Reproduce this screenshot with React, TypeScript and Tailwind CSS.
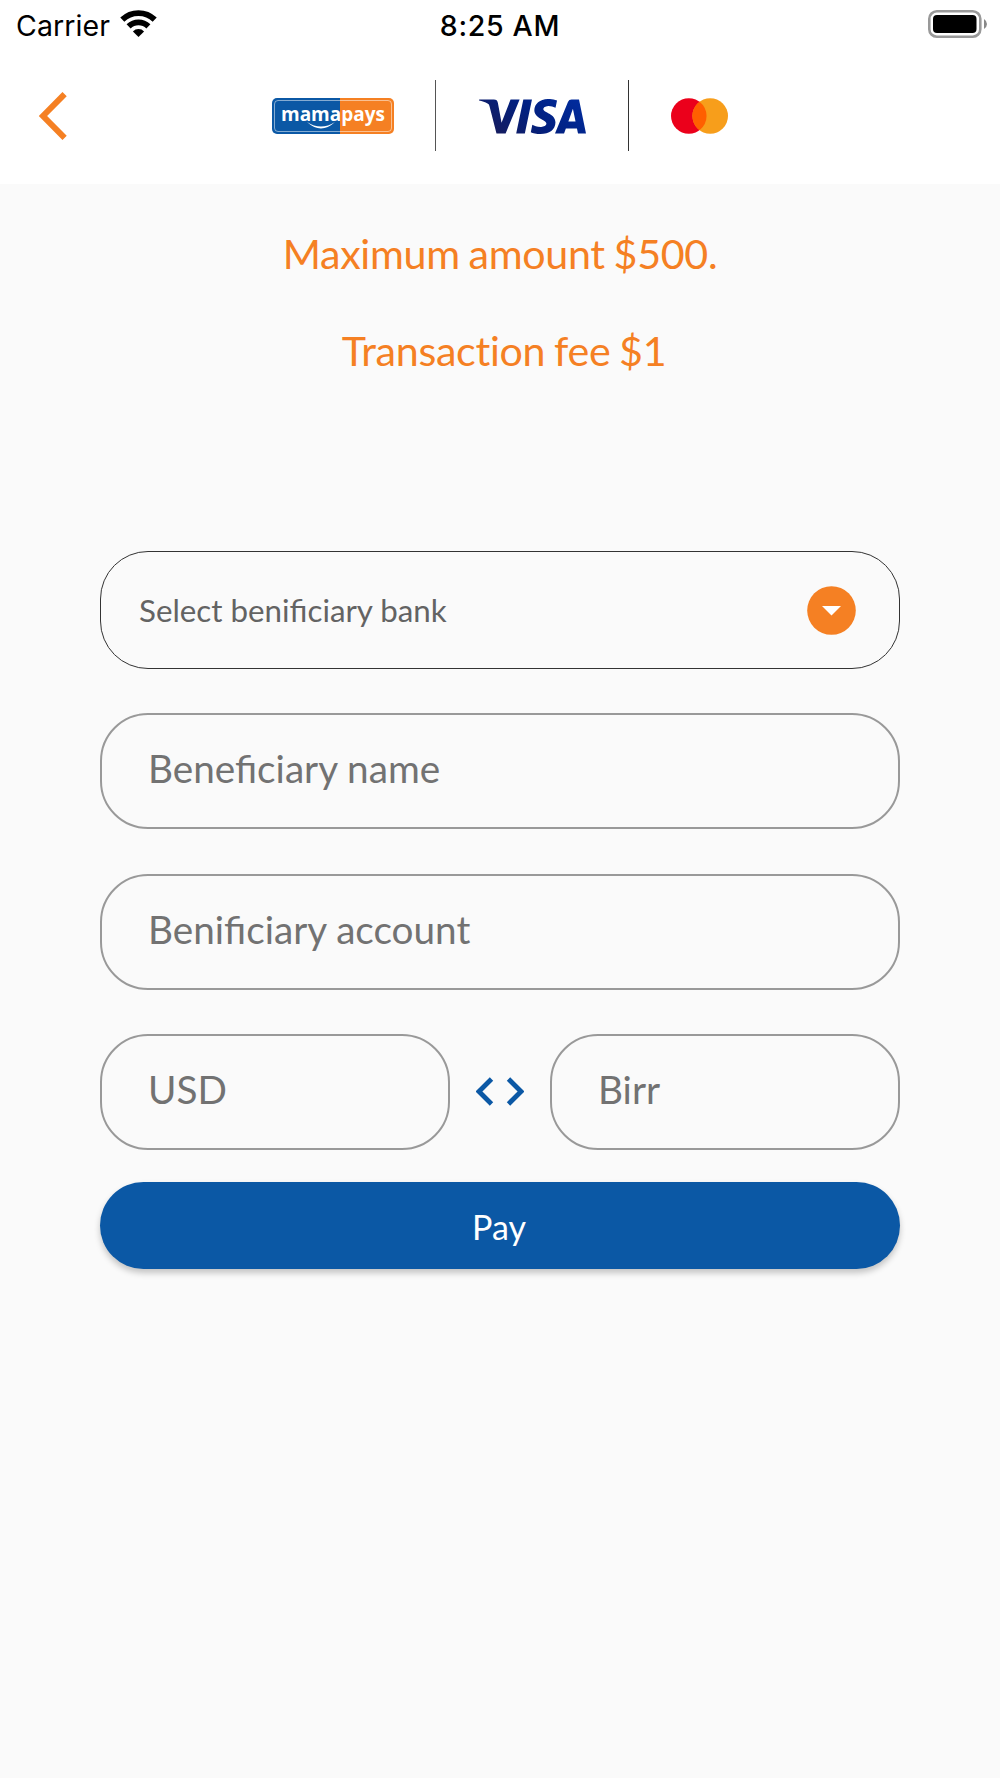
import React from "react";
import { SiVisa } from "react-icons/si";

function WifiIcon() {
  return (
    <svg className="ml-[10px] mt-[10px] h-[27px] w-[37px]" viewBox="0 0 37 27">
      <g fill="none" stroke="#000" strokeWidth="5.8">
        <path d="M2.3 9.7 A23.2 23.2 0 0 1 34.7 9.7" />
        <path d="M8.6 16.4 A14.2 14.2 0 0 1 28.4 16.4" />
      </g>
      <path d="M18.5 27 L12.9 21.4 A8 8 0 0 1 24.1 21.4 Z" />
    </svg>
  );
}

function StatusBar() {
  return (
    <div className="grid h-[50px] grid-cols-3 font-['Inter'] text-black">
      <div className="flex items-start pl-4">
        <span className="text-[28.5px] leading-[52px] tracking-[0.1px]">Carrier</span>
        <WifiIcon />
      </div>
      <div className="text-center text-[28.5px] font-medium leading-[52px] tracking-[0.7px]">8:25 AM</div>
      <div className="flex items-start justify-end pr-[13px] pt-[10px]">
        <svg className="h-7 w-[59px]" viewBox="0 0 59 28">
          <rect x="1.3" y="1.3" width="51" height="25.4" rx="7.5" fill="none" stroke="#999" strokeWidth="2.6" />
          <rect x="5" y="5" width="43.5" height="18" rx="4" />
          <path d="M56 9 Q59 11 59 14 Q59 17 56 19 Z" fill="#888" />
        </svg>
      </div>
    </div>
  );
}

function MamapaysLogo() {
  return (
    <div className="relative flex h-9 w-[122px] overflow-hidden rounded-[5px] bg-[linear-gradient(90deg,#0b58a5_68px,#f58023_68px)]">
      <div className="absolute inset-[2px] rounded-[4px] border border-white/50" />
      <span className="w-full text-center font-['Open_Sans'] text-[19px] font-bold leading-[32px] text-white">
        mamapays
      </span>
      <svg className="absolute left-[35px] top-[24px] h-2 w-7" viewBox="0 0 28 8">
        <path d="M0 0 Q14 9 28 0 Q14 13 0 0Z" fill="#fff" />
      </svg>
    </div>
  );
}

function Header() {
  return (
    <header className="flex h-[134px] items-start bg-white">
      <button aria-label="Back" className="ml-[38px] mt-[42px] h-12 w-[29px]">
        <svg className="h-12 w-[29px]" viewBox="0 0 29 48" fill="none" stroke="#f58023" strokeWidth="6">
          <path d="M26.6 2.1 L5 24 L26.6 45.9" />
        </svg>
      </button>
      <div className="ml-[205px] mt-[30px] flex h-[71px] items-center">
        <MamapaysLogo />
        <div className="ml-[41px] h-[71px] w-px bg-[#555]" />
        <SiVisa
          className="ml-[43px] mt-0.5 h-[35px] w-[107px]"
          viewBox="0 8.13 24 7.75"
          preserveAspectRatio="none"
          fill="url(#visa-blue)"
          aria-label="VISA"
        />
        <div className="ml-[42px] h-[71px] w-px bg-[#333]" />
        <svg className="ml-[42px] h-9 w-[57px]" viewBox="0 0 57 36">
          <circle cx="17.8" cy="18" r="17.8" fill="#eb001b" />
          <circle cx="39.2" cy="18" r="17.8" fill="#f79e1b" />
          <path d="M28.5 3.8 A17.8 17.8 0 0 1 28.5 32.2 A17.8 17.8 0 0 1 28.5 3.8Z" fill="#ff5f00" />
        </svg>
      </div>
      <svg width="0" height="0">
        <defs>
          <linearGradient id="visa-blue" x1="0" y1="0.7" x2="1" y2="0.3">
            <stop offset="0" stopColor="#171c5c" />
            <stop offset="0.5" stopColor="#02207f" />
            <stop offset="1" stopColor="#012b9c" />
          </linearGradient>
        </defs>
      </svg>
    </header>
  );
}

function Field({ label }: { label: string }) {
  return (
    <input
      aria-label={label}
      placeholder={label}
      className="block h-[116px] w-full min-w-0 rounded-[48px] border-2 border-[#999] bg-transparent px-[46px] pb-[6px] text-[38.7px] text-[#727272] outline-none placeholder:text-[#727272] placeholder:opacity-100"
    />
  );
}

export default function App() {
  return (
    <div className="min-h-[1778px] w-[1000px] bg-[#fafafa] font-['Lato',sans-serif]">
      <div className="bg-white">
        <StatusBar />
        <Header />
      </div>
      <main className="px-[100px]">
        <div className="h-[367px] pt-[45px] text-center text-[41.2px] leading-[49px] tracking-[-0.3px] text-[#f58023] [word-spacing:-1.5px]">
          <p>Maximum amount $500.</p>
          <p className="ml-2 mt-12">Transaction fee $1</p>
        </div>
        <button className="flex h-[118px] w-full items-center justify-between rounded-[48px] border border-[#333] pl-[38px] pr-[43px]">
          <span className="text-[31.3px] text-[#636363]">Select benificiary bank</span>
          <svg className="h-[49px] w-[49px]" viewBox="0 0 49 49">
            <circle cx="24.5" cy="24.5" r="24.3" fill="#f58023" />
            <path d="M15 20 H34 L24.5 29.5Z" fill="#fff" />
          </svg>
        </button>
        <div className="mt-11 flex flex-col gap-[45px]">
          <Field label="Beneficiary name" />
          <Field label="Benificiary account" />
        </div>
        <div className="mt-11 flex items-center">
          <div className="w-[350px]"><Field label="USD" /></div>
          <div className="flex w-[100px] justify-center">
            <svg className="mb-px h-[29px] w-12" viewBox="0 0 48 29" fill="none" stroke="#0b58a5" strokeWidth="4.8">
              <path d="M15.5 2 L3 14.5 L15.5 27 M32.5 2 L45 14.5 L32.5 27" />
            </svg>
          </div>
          <div className="w-[350px]"><Field label="Birr" /></div>
        </div>
        <button className="mt-8 h-[87px] w-full rounded-full bg-[#0b58a5] pr-0.5 pt-0.5 text-[34px] text-white shadow-[0_4px_6px_rgba(0,0,0,0.22)]">
          Pay
        </button>
      </main>
    </div>
  );
}
